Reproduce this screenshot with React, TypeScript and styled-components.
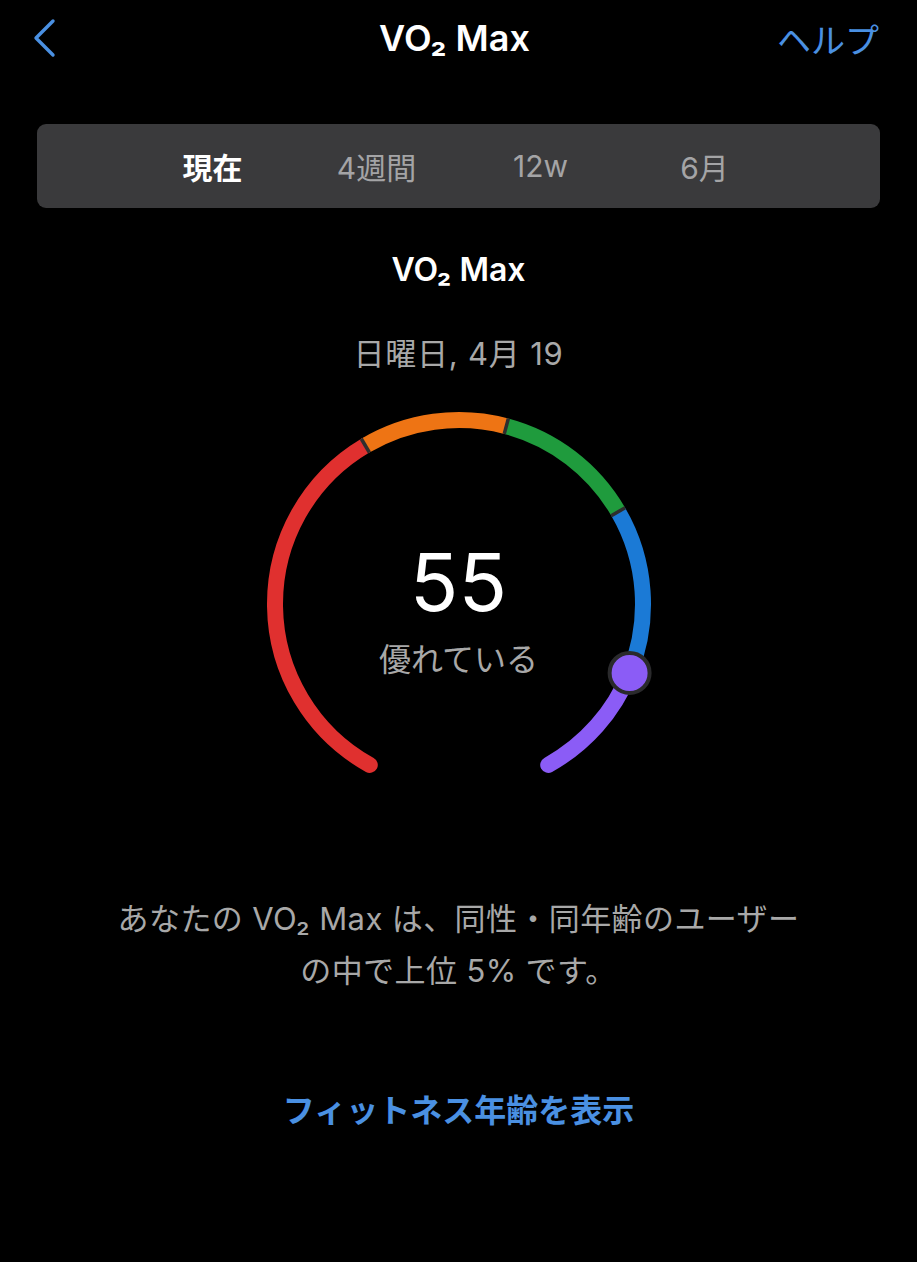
import styled, { createGlobalStyle } from "styled-components";

const GlobalStyle = createGlobalStyle`
  html, body {
    margin: 0;
    padding: 0;
    background: #000;
  }
  body {
    font-family: "Inter", "Noto Sans CJK JP", sans-serif;
    color: #fff;
  }
`;

const Page = styled.div`
  width: 917px;
  min-height: 1262px;
  background: #000;
  display: flex;
  flex-direction: column;
  align-items: center;
`;

const NavBar = styled.div`
  width: 100%;
  height: 76px;
  display: grid;
  grid-template-columns: 1fr auto 1fr;
  align-items: center;
  padding: 0 38px 0 30px;
  box-sizing: border-box;
`;

const BackButton = styled.div`
  justify-self: start;
  display: flex;
  align-items: center;
`;

const NavTitle = styled.div`
  font-size: 36px;
  font-weight: 600;
  letter-spacing: 0px;
`;

const HelpLink = styled.div`
  justify-self: end;
  color: #4a90e2;
  font-size: 34px;
`;

const Segmented = styled.div`
  margin-top: 48px;
  width: 843px;
  height: 84px;
  background: #3a3a3c;
  border-radius: 9px;
  display: flex;
  justify-content: center;
  align-items: center;
`;

const SegmentItem = styled.div<{ $active?: boolean }>`
  width: 164px;
  text-align: center;
  font-size: 30px;
  font-weight: ${(p) => (p.$active ? 700 : 400)};
  color: ${(p) => (p.$active ? "#fff" : "#a4a4a6")};
`;

const SectionTitle = styled.div`
  margin-top: 42px;
  font-size: 32px;
  font-weight: 600;
  line-height: 40px;
`;

const DateLabel = styled.div`
  margin-top: 44px;
  font-size: 31px;
  letter-spacing: 0.8px;
  color: #a8a8a8;
  line-height: 40px;
`;

const GaugeWrap = styled.div`
  margin-top: 30px;
  display: grid;
  place-items: center;
  & > * {
    grid-area: 1 / 1;
  }
`;

const GaugeCenter = styled.div`
  display: flex;
  flex-direction: column;
  align-items: center;
  margin-top: 28px;
`;

const Score = styled.div`
  font-size: 80px;
  font-weight: 400;
  line-height: 90px;
`;

const Rating = styled.div`
  font-size: 32px;
  color: #a8a8a8;
  line-height: 40px;
  margin-top: 13px;
`;

const Summary = styled.div`
  margin-top: 109px;
  font-size: 31px;
  letter-spacing: 0.4px;
  line-height: 52px;
  color: #a8a8a8;
  text-align: center;
`;

const FitnessLink = styled.div`
  margin-top: 88px;
  font-size: 32px;
  font-weight: 700;
  color: #4a90e2;
`;

const CX = 200;
const CY = 200;
const R = 184;
const STROKE = 16;

function pt(deg: number, r = R) {
  const a = (deg * Math.PI) / 180;
  return [CX + r * Math.cos(a), CY + r * Math.sin(a)];
}

function arc(a1: number, a2: number) {
  const [x1, y1] = pt(a1);
  const [x2, y2] = pt(a2);
  const large = a2 - a1 > 180 ? 1 : 0;
  return `M ${x1} ${y1} A ${R} ${R} 0 ${large} 1 ${x2} ${y2}`;
}

// round-capped ends drawn first so the butt segments cover their inner caps
const segments = [
  { from: 119, to: 239.4, color: "#e0302f", cap: "round" },
  { from: 382, to: 421, color: "#8b5cf6", cap: "round" },
  { from: 239.4, to: 284.9, color: "#ee7414", cap: "butt" },
  { from: 284.9, to: 329.9, color: "#1f9b3d", cap: "butt" },
  { from: 329.9, to: 382, color: "#1b7ad6", cap: "butt" },
] as const;

const dividers = [239.4, 284.9, 329.9];

function Gauge() {
  const [kx, ky] = pt(382);
  return (
    <svg width={400} height={380} viewBox="0 0 400 380">
      {segments.map((s) => (
        <path
          key={s.from}
          d={arc(s.from, s.to)}
          fill="none"
          stroke={s.color}
          strokeWidth={STROKE}
          strokeLinecap={s.cap}
        />
      ))}
      {dividers.map((d) => {
        const [x1, y1] = pt(d, R - STROKE / 2);
        const [x2, y2] = pt(d, R + STROKE / 2);
        return (
          <line key={d} x1={x1} y1={y1} x2={x2} y2={y2} stroke="#2e2e2e" strokeWidth={3.5} />
        );
      })}
      <circle cx={kx} cy={ky} r={20} fill="#8b5cf6" stroke="#2a2a2c" strokeWidth={4} />
    </svg>
  );
}

export default function App() {
  return (
    <Page>
      <GlobalStyle />
      <NavBar>
        <BackButton>
          <svg width="28" height="40" viewBox="0 0 28 40">
            <path d="M23 3 L6 20 L23 37" fill="none" stroke="#4a90e2" strokeWidth="3.4" strokeLinecap="round" strokeLinejoin="round" />
          </svg>
        </BackButton>
        <NavTitle>VO₂ Max</NavTitle>
        <HelpLink>ヘルプ</HelpLink>
      </NavBar>
      <Segmented>
        <SegmentItem $active>現在</SegmentItem>
        <SegmentItem>4週間</SegmentItem>
        <SegmentItem>12w</SegmentItem>
        <SegmentItem>6月</SegmentItem>
      </Segmented>
      <SectionTitle>VO₂ Max</SectionTitle>
      <DateLabel>日曜日, 4月 19</DateLabel>
      <GaugeWrap>
        <Gauge />
        <GaugeCenter>
          <Score>55</Score>
          <Rating>優れている</Rating>
        </GaugeCenter>
      </GaugeWrap>
      <Summary>
        あなたの VO₂ Max は、同性・同年齢のユーザー
        <br />
        の中で上位 5% です。
      </Summary>
      <FitnessLink>フィットネス年齢を表示</FitnessLink>
    </Page>
  );
}
